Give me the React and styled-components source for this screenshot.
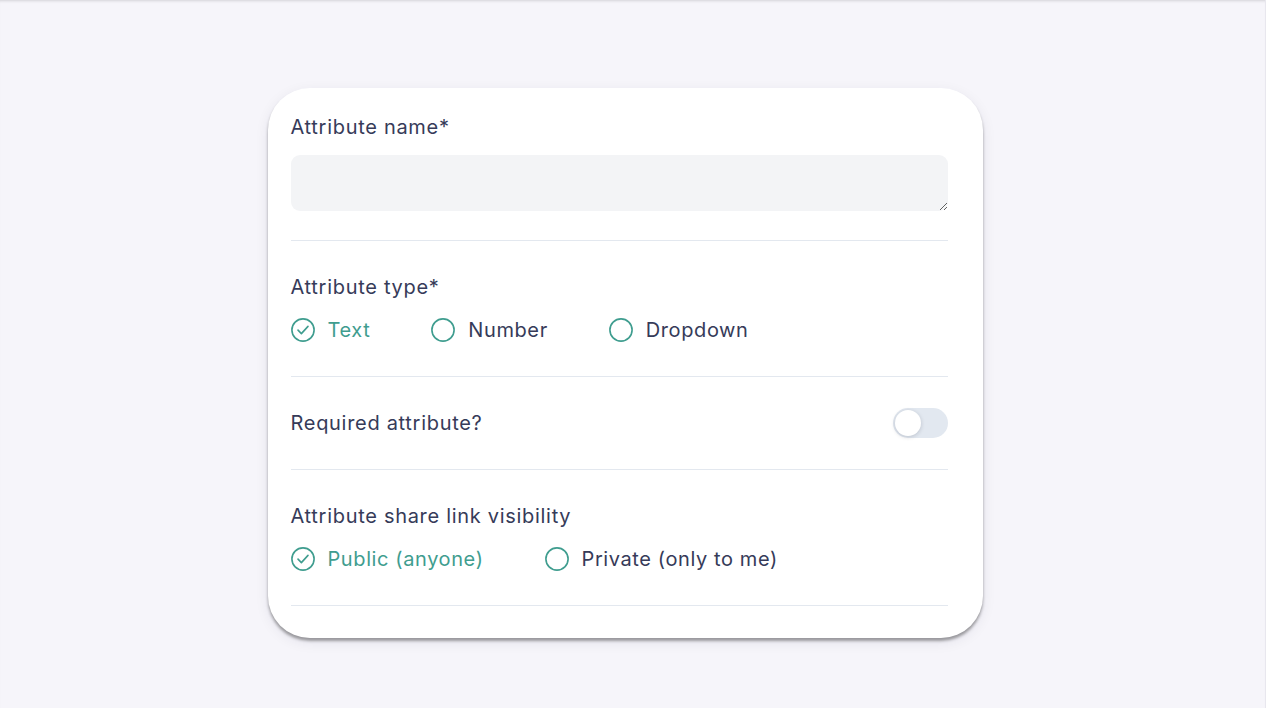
import styled, { createGlobalStyle } from "styled-components";

const GlobalStyle = createGlobalStyle`
  html, body {
    margin: 0;
    padding: 0;
    background: #f6f5fa;
    font-family: Inter, "Noto Sans", "Liberation Sans", sans-serif;
  }
`;

const Page = styled.div`
  min-height: 708px;
  box-sizing: border-box;
  padding: 88px 15px 0 0;
  display: flex;
  justify-content: center;
  align-items: flex-start;
  box-shadow: inset 0 3px 3px -2px rgba(0, 0, 0, 0.14);
  border-right: 1px solid #e8e7ee;
`;

const Card = styled.div`
  width: 715px;
  box-sizing: border-box;
  background: #fff;
  border-radius: 42px;
  padding: 27px 35px 32px 23px;
  box-shadow: 0 3px 3px rgba(0, 0, 0, 0.35), 0 4px 14px rgba(30, 30, 60, 0.08);
`;

const Section = styled.div`
  padding: ${(p) => p.$pad || "34px 0"};
  border-bottom: 1px solid #e3e8ef;
  display: flex;
  flex-direction: ${(p) => (p.$row ? "row" : "column")};
  align-items: ${(p) => (p.$row ? "center" : "stretch")};
  justify-content: space-between;
  gap: ${(p) => p.$gap || "19px"};
`;

const Label = styled.div`
  font-size: 20px;
  line-height: 24px;
  color: #363b59;
  letter-spacing: 0.7px;
`;

const TextArea = styled.textarea`
  display: block;
  height: 56px;
  box-sizing: border-box;
  border: none;
  border-radius: 9px;
  background: #f3f4f6;
  resize: vertical;
  font: inherit;
  outline: none;
  padding: 10px 14px;
`;

const Options = styled.div`
  display: flex;
  align-items: center;
  gap: 61px;
`;

const Option = styled.label`
  display: flex;
  align-items: center;
  gap: 13px;
  font-size: 20px;
  line-height: 24px;
  letter-spacing: 0.6px;
  color: ${(p) => (p.$checked ? "#3f9d8f" : "#363b59")};
  cursor: pointer;
`;

const Toggle = styled.div`
  width: 55px;
  height: 30px;
  border-radius: 15px;
  background: #e2e8f0;
  padding: 2px;
  box-sizing: border-box;
  display: flex;
  align-items: center;
`;

const Thumb = styled.div`
  width: 26px;
  height: 26px;
  border-radius: 50%;
  background: #fff;
  box-shadow: 0 1px 4px rgba(15, 23, 42, 0.18);
`;

const Radio = ({ checked }) => (
  <svg width="24" height="24" viewBox="0 0 24 24" fill="none">
    <circle cx="12" cy="12" r="11.1" stroke="#3f9d8f" strokeWidth="1.6" />
    {checked && (
      <path
        d="M7 12.1 L10.4 15.6 L17 8.4"
        stroke="#3f9d8f"
        strokeWidth="1.6"
        strokeLinecap="round"
        strokeLinejoin="round"
      />
    )}
  </svg>
);

const RadioGroup = ({ items, value }) => (
  <Options>
    {items.map((it) => (
      <Option key={it} $checked={it === value}>
        <Radio checked={it === value} />
        {it}
      </Option>
    ))}
  </Options>
);

export default function App() {
  return (
    <>
      <GlobalStyle />
      <Page>
        <Card>
          <Section $pad="0 0 29px" $gap="16px">
            <Label>Attribute name*</Label>
            <TextArea />
          </Section>
          <Section>
            <Label>Attribute type*</Label>
            <RadioGroup items={["Text", "Number", "Dropdown"]} value="Text" />
          </Section>
          <Section $row $pad="31px 0">
            <Label>Required attribute?</Label>
            <Toggle>
              <Thumb />
            </Toggle>
          </Section>
          <Section>
            <Label>Attribute share link visibility</Label>
            <RadioGroup
              items={["Public (anyone)", "Private (only to me)"]}
              value="Public (anyone)"
            />
          </Section>
        </Card>
      </Page>
    </>
  );
}
